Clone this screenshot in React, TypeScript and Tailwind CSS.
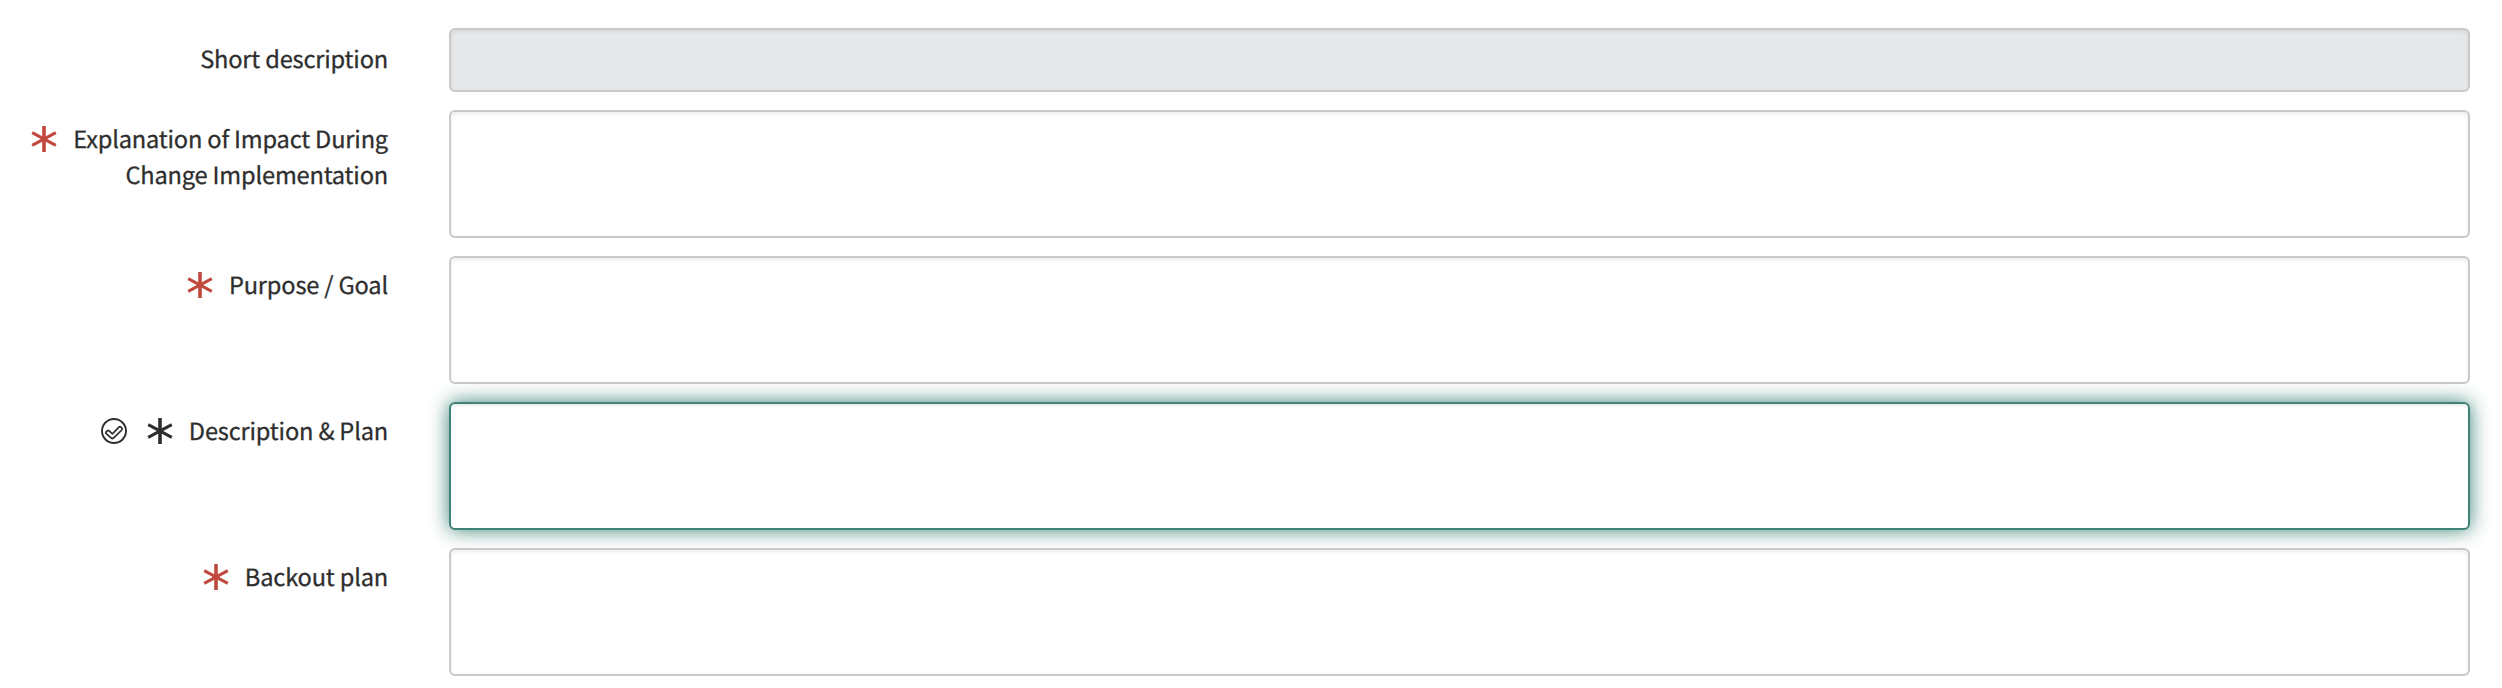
import React from "react";

function Asterisk({ className }: { className: string }) {
  return (
    <svg viewBox="0 0 26 26" className={`mt-1.5 h-[26px] w-[26px] shrink-0 ${className}`} fill="none" stroke="currentColor">
      <path d="M13 0V26" strokeWidth="3.6" />
      <path d="M1.2 6.6L24.8 19.4M24.8 6.6L1.2 19.4" strokeWidth="3" />
    </svg>
  );
}

function CheckCircle() {
  return (
    <svg viewBox="0 0 26 26" className="mr-5 mt-1.5 h-[26px] w-[26px] shrink-0" fill="none" stroke="currentColor" strokeLinejoin="round">
      <circle cx="13" cy="13" r="12" strokeWidth="1.9" />
      <path
        d="M4.9 14.2L6.2 12.9Q7.2 12.1 8.2 12.9L11.4 15.9L17.9 9.2Q18.9 8.3 19.9 9.2L20.8 10.1Q21.7 11 20.8 12L12.4 20.1Q11.4 20.9 10.4 20.1L5.2 15.6Q4.4 14.9 4.9 14.2Z"
        strokeWidth="1.7"
      />
    </svg>
  );
}

type FieldProps = {
  id: string;
  label: string;
  state?: "required" | "filled";
  readOnly?: boolean;
  focused?: boolean;
};

function Field({ id, label, state, readOnly = false, focused = false }: FieldProps) {
  const border = focused
    ? "border-[#3e8375] shadow-[inset_0_2px_2px_rgba(0,0,0,0.075),0_0_20px_#3e8375]"
    : "border-[#c9c9c9] shadow-[inset_0_2px_4px_rgba(0,0,0,0.075)]";
  return (
    <div className="flex">
      <label htmlFor={id} className={`flex w-[388px] shrink-0 justify-end ${readOnly ? "pt-3" : "pt-2.5"}`}>
        {focused && <CheckCircle />}
        {state === "required" && <Asterisk className="text-[#c0483d]" />}
        {state === "filled" && <Asterisk className="text-[#2e2e2e]" />}
        <span className="ml-4 whitespace-pre-line text-right">{label}</span>
      </label>
      {readOnly ? (
        <input
          id={id}
          readOnly
          className={`ml-[61px] h-16 w-[2021px] rounded-md border-2 bg-[#e7e8ea] px-4 outline-none ${border}`}
        />
      ) : (
        <textarea
          id={id}
          className={`ml-[61px] block h-32 w-[2021px] resize-none rounded-md border-2 bg-white px-4 outline-none ${border}`}
        />
      )}
    </div>
  );
}

export default function App() {
  return (
    <form className="flex h-[688px] w-[2502px] flex-col gap-[18px] overflow-hidden bg-white pt-7 font-['Noto_Sans_CJK_SC',sans-serif] text-[23.6px] leading-9 tracking-[-0.17px] text-[#2e2e2e] [-webkit-text-stroke:0.3px_#2e2e2e] [text-rendering:geometricPrecision]">
      <Field id="short-description" label="Short description" readOnly />
      <Field id="impact" label={"Explanation of Impact During\nChange Implementation"} state="required" />
      <Field id="purpose" label="Purpose / Goal" state="required" />
      <Field id="plan" label="Description & Plan" state="filled" focused />
      <Field id="backout" label="Backout plan" state="required" />
    </form>
  );
}
